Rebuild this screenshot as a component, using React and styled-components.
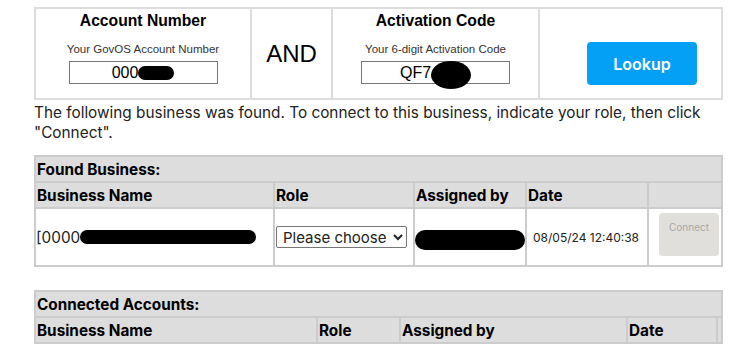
import React from "react";
import styled, { createGlobalStyle } from "styled-components";

const GlobalStyle = createGlobalStyle`
  *, *::before, *::after {
    box-sizing: border-box;
  }
  body {
    margin: 0;
    background: #fff;
    font-family: Inter, "Liberation Sans", Arial, sans-serif;
    color: #222;
  }
`;

const Page = styled.div`
  width: 723px;
  padding: 7px 0 0 34px;
`;

const LookupPanel = styled.div`
  display: grid;
  grid-template-columns: 214px 79px 205px 181px;
  gap: 2px;
  padding: 2px;
  background: #dddddd;
  height: 93px;
`;

const PanelCell = styled.div`
  background: #fff;
  display: flex;
  flex-direction: column;
  align-items: ${p => (p.$start ? "flex-start" : "center")};
  justify-content: ${p => (p.$middle ? "center" : "flex-start")};
  padding: ${p => p.$pad || "3px 0 0"};
  font-family: "Liberation Sans", Arial, sans-serif;
`;

const FieldTitle = styled.div`
  font-size: 15.7px;
  font-weight: bold;
  color: #000;
  line-height: 17px;
  white-space: nowrap;
`;

const FieldHint = styled.div`
  font-size: 11.5px;
  color: #333;
  margin-top: 14px;
  line-height: 13px;
  white-space: nowrap;
`;

const CodeBox = styled.div`
  margin-top: 5px;
  width: 149px;
  height: 23px;
  border: 1px solid #767676;
  display: flex;
  align-items: center;
  justify-content: center;
  font-size: 16px;
  color: #000;
`;

const Redaction = styled.span`
  display: inline-block;
  background: #000;
  width: ${p => p.$w}px;
  height: ${p => p.$h}px;
  border-radius: ${p => p.$r || "50%"};
  margin: ${p => p.$m || "0"};
  vertical-align: middle;
  flex: none;
`;

const AndLabel = styled.div`
  font-size: 24px;
  color: #000;
`;

const LookupButton = styled.button`
  width: 110px;
  height: 43px;
  border: none;
  border-radius: 4px;
  background: #03a0f5;
  color: #fff;
  font-family: Inter, sans-serif;
  font-size: 16px;
  font-weight: 600;
`;

const Note = styled.p`
  margin: 3px 0 12px;
  font-size: 15.35px;
  line-height: 20px;
  color: #222;
  width: 710px;
`;

const Table = styled.div`
  display: grid;
  grid-template-columns: ${p => p.$cols};
  gap: 2px;
  padding: 2px;
  width: 689px;
  background: #cccccc;
  margin-bottom: ${p => p.$mb || "0"};
`;

const Caption = styled.div`
  grid-column: 1 / -1;
  background: #dddddd;
  height: 24px;
  display: flex;
  align-items: center;
  padding-left: 1px;
  font-size: 15.3px;
  font-weight: bold;
  color: #000;
`;

const HeadCell = styled.div`
  background: #dddddd;
  height: 24px;
  display: flex;
  align-items: center;
  padding-left: 1px;
  font-size: 15.3px;
  font-weight: bold;
  color: #000;
  white-space: nowrap;
  overflow: hidden;
`;

const DataCell = styled.div`
  background: #fff;
  height: 56px;
  display: flex;
  align-items: ${p => (p.$top ? "flex-start" : "center")};
  padding: ${p => p.$pad || "0"};
  font-size: ${p => p.$size || 15.3}px;
  color: #222;
  white-space: nowrap;
  overflow: hidden;
`;

const RoleSelect = styled.select`
  width: 131px;
  height: 22px;
  margin-left: 1px;
  font-family: Inter, sans-serif;
  font-size: 15px;
  color: #222;
  border: 1px solid #767676;
  border-radius: 2px;
  background: #fff;
  padding: 0 0 0 2px;
`;

const ConnectButton = styled.button`
  width: 60px;
  height: 43px;
  border: none;
  border-radius: 4px;
  background: #e1dfdb;
  color: #a8a8a8;
  font-family: Inter, sans-serif;
  font-size: 10px;
  padding: 0 0 16px;
`;

const foundCols = "237px 138px 110px 120px 72px";
const connectedCols = "280px 81px 225px 88px 3px";

export default function App() {
  return (
    <>
      <GlobalStyle />
      <Page>
        <LookupPanel>
          <PanelCell>
            <FieldTitle>Account Number</FieldTitle>
            <FieldHint>Your GovOS Account Number</FieldHint>
            <CodeBox>
              000
              <Redaction $w={36} $h={14} $r="7px" />
            </CodeBox>
          </PanelCell>
          <PanelCell $middle $pad="0">
            <AndLabel>AND</AndLabel>
          </PanelCell>
          <PanelCell>
            <FieldTitle>Activation Code</FieldTitle>
            <FieldHint>Your 6-digit Activation Code</FieldHint>
            <CodeBox>
              QF7
              <Redaction $w={40} $h={28} $m="-2px 0 -6px" />
            </CodeBox>
          </PanelCell>
          <PanelCell $start $pad="33px 0 0 47px">
            <LookupButton>Lookup</LookupButton>
          </PanelCell>
        </LookupPanel>

        <Note>
          The following business was found. To connect to this business, indicate your role, then click
          "Connect".
        </Note>

        <Table $cols={foundCols} $mb="23px">
          <Caption>Found Business:</Caption>
          <HeadCell>Business Name</HeadCell>
          <HeadCell>Role</HeadCell>
          <HeadCell>Assigned by</HeadCell>
          <HeadCell>Date</HeadCell>
          <HeadCell />
          <DataCell>
            [0000
            <Redaction $w={176} $h={14} $r="7px" />
          </DataCell>
          <DataCell>
            <RoleSelect defaultValue="">
              <option value="">Please choose</option>
            </RoleSelect>
          </DataCell>
          <DataCell>
            <Redaction $w={110} $h={20} $r="10px" $m="5px 0 0" />
          </DataCell>
          <DataCell $size={12} $pad="0 0 0 6px">
            08/05/24 12:40:38
          </DataCell>
          <DataCell $top $pad="4px 0 0 10px">
            <ConnectButton disabled>Connect</ConnectButton>
          </DataCell>
        </Table>

        <Table $cols={connectedCols}>
          <Caption>Connected Accounts:</Caption>
          <HeadCell>Business Name</HeadCell>
          <HeadCell>Role</HeadCell>
          <HeadCell>Assigned by</HeadCell>
          <HeadCell>Date</HeadCell>
          <HeadCell />
        </Table>
      </Page>
    </>
  );
}
